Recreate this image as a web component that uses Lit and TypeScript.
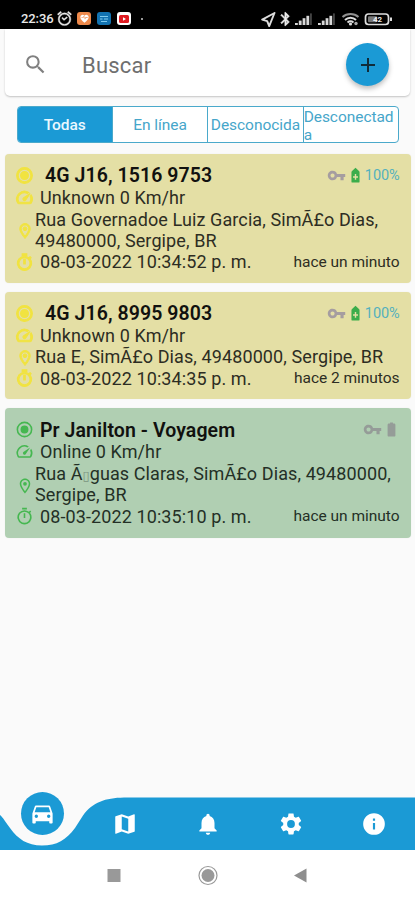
import { LitElement, html, svg, css, nothing } from "lit";
import { customElement, property } from "lit/decorators.js";

const paths: Record<string, string> = {
  search: "M15.5 14h-.79l-.28-.27A6.47 6.47 0 0 0 16 9.5 6.5 6.5 0 1 0 9.5 16c1.61 0 3.09-.59 4.23-1.57l.27.28v.79l5 4.99L20.49 19l-4.99-5zm-6 0C7.01 14 5 11.99 5 9.5S7.01 5 9.5 5 14 7.01 14 9.5 11.99 14 9.5 14z",
  add: "M19 13h-6v6h-2v-6H5v-2h6V5h2v6h6v2z",
  vpn: "M12.65 10A5.990 5.990 0 0 0 7 6c-3.310 0-6 2.690-6 6s2.690 6 6 6a5.990 5.990 0 0 0 5.650-4H17v4h4v-4h2v-4H12.650zM7 14.600c-1.430 0-2.600-1.170-2.600-2.600S5.570 9.400 7 9.400s2.600 1.170 2.600 2.600-1.170 2.600-2.600 2.600z",
  charging: "M12 1L7.500 5.200C6.600 5.900 6.300 6.300 6.300 7V20.700C6.300 21.400 6.900 22 7.600 22h8.800c.7 0 1.300-.6 1.300-1.300V7c0-.7-.3-1.100-1.200-1.800zM11 10h2v3h2.500v2H13v3h-2v-3H8.500v-2H11z",
  battery: "M15.670 3.500H14V2h-4v1.500H8.330C7.600 3.500 6.500 4.100 6.500 5.330v15.330C6.500 21.400 7.600 22 8.330 22h7.330c.74 0 1.840-.6 1.840-1.330V5.330C17.500 4.100 16.400 3.500 15.670 3.500z",
  radio: "M12 7a5 5 0 1 0 0 10 5 5 0 0 0 0-10zm0-5a10 10 0 1 0 0 20 10 10 0 0 0 0-20zm0 18a8 8 0 1 1 0-16 8 8 0 0 1 0 16z",
  speed: "M20.380 8.570l-1.230 1.850a8 8 0 0 1-.22 7.580H5.070A8 8 0 0 1 15.580 6.850l1.850-1.230A10 10 0 0 0 3.350 19a2 2 0 0 0 1.720 1h13.850a2 2 0 0 0 1.740-1 10 10 0 0 0-.27-10.440zm-9.790 6.840a2 2 0 0 0 2.830 0l5.660-8.490-8.490 5.660a2 2 0 0 0 0 2.830z",
  pin: "M12 2C8.130 2 5 5.130 5 9c0 5.250 7 13 7 13s7-7.750 7-13c0-3.870-3.130-7-7-7zM7 9c0-2.760 2.240-5 5-5s5 2.240 5 5c0 2.880-2.880 7.190-5 9.880C9.920 16.210 7 11.850 7 9zm5-2.500a2.500 2.500 0 1 0 0 5 2.500 2.500 0 0 0 0-5z",
  timer: "M15 1H9v2h6V1zm-4 13h2V8h-2v6zm8.030-6.610l1.420-1.420c-.43-.51-.9-.99-1.410-1.410l-1.420 1.420A8.960 8.960 0 0 0 12 4a9 9 0 1 0 7.030 3.390zM12 20a7 7 0 1 1 0-14 7 7 0 0 1 0 14z",
  car: "M18.920 5.010C18.720 4.420 18.160 4 17.500 4h-11c-.66 0-1.210.42-1.420 1.010L3 11v8c0 .55.45 1 1 1h1c.55 0 1-.45 1-1v-1h12v1c0 .55.45 1 1 1h1c.55 0 1-.45 1-1v-8l-2.080-5.990zM6.500 15a1.500 1.500 0 1 1 0-3 1.500 1.500 0 0 1 0 3zm11 0a1.500 1.500 0 1 1 0-3 1.500 1.500 0 0 1 0 3zM5 10l1.500-4.500h11L19 10H5z",
  map: "M20.500 3l-.16.030L15 5.100 9 3 3.360 4.900c-.21.070-.36.250-.36.480V20.500c0 .28.220.5.500.5l.16-.030L9 18.900l6 2.100 5.640-1.900c.21-.070.36-.25.36-.48V3.500c0-.28-.22-.5-.5-.5zM15 19l-6-2.110V5l6 2.110V19z",
  bell: "M12 22c1.100 0 2-.9 2-2h-4c0 1.100.89 2 2 2zm6-6v-5c0-3.070-1.640-5.640-4.500-6.320V4c0-.83-.67-1.500-1.500-1.500s-1.500.67-1.500 1.500v.68C7.630 5.360 6 7.920 6 11v5l-2 2v1h16v-1l-2-2z",
  gear: "M19.140 12.940c.040-.3.060-.61.060-.94 0-.32-.020-.64-.070-.94l2.030-1.580c.18-.14.230-.41.120-.61l-1.920-3.320c-.12-.22-.37-.29-.59-.22l-2.390.96c-.5-.38-1.030-.7-1.620-.94l-.36-2.540c-.040-.24-.24-.41-.48-.41h-3.840c-.24 0-.43.17-.47.41l-.36 2.540c-.59.24-1.130.57-1.620.94l-2.390-.96c-.22-.080-.47 0-.59.22L2.740 8.870c-.12.21-.080.47.120.61l2.030 1.580c-.050.3-.090.63-.090.94s.020.64.070.94l-2.030 1.580c-.18.14-.23.41-.12.61l1.920 3.320c.12.220.37.290.59.220l2.390-.96c.5.380 1.030.7 1.620.94l.36 2.540c.050.240.240.410.480.410h3.840c.24 0 .44-.17.470-.41l.36-2.540c.59-.24 1.130-.56 1.620-.94l2.390.96c.22.080.47 0 .59-.22l1.920-3.320c.12-.22.070-.47-.12-.61l-2.010-1.580zM12 15.600A3.600 3.600 0 1 1 12 8.400a3.600 3.600 0 0 1 0 7.200z",
  info: "M12 2a10 10 0 1 0 0 20 10 10 0 0 0 0-20zm1 15h-2v-6h2v6zm0-8h-2V7h2v2z",
  alarm: "M22 5.720l-4.600-3.860-1.290 1.530 4.600 3.860L22 5.720zM7.880 3.390L6.600 1.860 2 5.710l1.290 1.530 4.590-3.850zM12 4a9 9 0 1 0 0 18 9 9 0 0 0 0-18zm0 16a7 7 0 1 1 0-14 7 7 0 0 1 0 14zM8 11.500l1.200-1.200 2.300 2.200 3.700-3 1 1.300-4.900 4z",
  heart: "M12 21C6 16 3 13 3 9c0-5 6-7 9-3 3-4 9-2 9 3 0 4-3 7-9 12zM5 11h4l2-3 2 6 2-3h4v-1.500h-5l-1 1.500-2-5-3 4H5z",
  bluetooth: "M17.710 7.710L12 2h-1v7.590L6.410 5 5 6.410 10.590 12 5 17.590 6.410 19 11 14.410V22h1l5.710-5.710-4.300-4.290 4.300-4.290zM13 5.830l1.880 1.880L13 9.590V5.830zm1.880 10.460L13 18.170v-3.760l1.880 1.880z",
};

@customElement("ui-icon")
class UiIcon extends LitElement {
  static styles = css`
    :host { display: inline-flex; flex: none; width: 20px; height: 20px; }
    svg { width: 100%; height: 100%; fill: currentColor; stroke: currentColor; stroke-width: var(--icon-stroke, 0); display: block; overflow: visible; }
  `;
  @property() name = "";
  render() {
    return html`<svg viewBox="0 0 24 24">${svg`<path fill-rule="evenodd" d=${paths[this.name]}></path>`}</svg>`;
  }
}

interface Device {
  name: string;
  indented: boolean;
  status: string;
  address: unknown[];
  date: string;
  ago: string;
  battery?: string;
}

@customElement("device-card")
class DeviceCard extends LitElement {
  static styles = css`
    :host { display: block; }
    .card {
      box-sizing: border-box; margin: 0 4.5px 9px 5px; padding: 9.500px 11px 9.700px 10px;
      border-radius: 4px; background: #e4dfa5; color: #2d2d23;
      font-size: 18px; line-height: 21.300px; letter-spacing: 0.1px; white-space: nowrap;
      box-shadow: 0 0 2px #0000000d;
    }
    .online { background: #b0cfb2; color: #243026; padding-bottom: 10.300px; }
    .row { display: flex; align-items: center; height: 22px; }
    .lead { width: 19px; height: 19px; color: #f1e340; margin-right: 6px; --icon-stroke: 1.3; }
    .online .lead { color: #45b750; --icon-stroke: 0; }
    .title { height: 23px; }
    .title .name { font-size: 19.500px; font-weight: 600; color: #11110f; letter-spacing: 0.08px; padding-top: 2px; }
    .title .lead, .title .meta { margin-top: 1px; }
    .indent { margin-left: 5px; }
    .place { display: flex; align-items: center; }
    .place > .lead { width: 18px; height: 18px; margin: 3px 1.500px 0 0.500px; }
    .meta { display: flex; align-items: center; margin-left: auto; color: #a59da0; }
    .meta .key { width: 19px; height: 19px; margin-right: 1px; }
    .meta .bat { width: 17px; height: 17px; }
    .meta .green { color: #3bad4b; }
    .pct { color: #54b1bd; font-size: 14.500px; letter-spacing: -0.1px; margin-left: 1px; }
    .online .key, .online .bat { color: #959c98; }
    .ago { margin-left: auto; font-size: 15.500px; letter-spacing: -0.03px; padding-top: 1px; }
    .box { font: 13px/13px "DejaVu Sans", sans-serif; letter-spacing: 0; color: #7b947f; }
  `;
  @property({ attribute: false }) device!: Device;
  render() {
    const d = this.device;
    const low = d.battery === undefined;
    return html`<div class="card ${low ? "online" : ""}">
      <div class="row title">
        <ui-icon class="lead" name="radio"></ui-icon>
        <span class="name ${d.indented ? "indent" : ""}">${d.name}</span>
        <div class="meta">
          <ui-icon class="key" name="vpn"></ui-icon>
          <ui-icon class="bat ${low ? "" : "green"}" name=${low ? "battery" : "charging"}></ui-icon>
          ${low ? nothing : html`<span class="pct">${d.battery}</span>`}
        </div>
      </div>
      <div class="row"><ui-icon class="lead" name="speed"></ui-icon><span>${d.status}</span></div>
      <div class="place">
        <ui-icon class="lead" name="pin"></ui-icon>
        <div>${d.address.map((l) => html`<div>${l}</div>`)}</div>
      </div>
      <div class="row">
        <ui-icon class="lead" name="timer"></ui-icon><span>${d.date}</span><span class="ago">${d.ago}</span>
      </div>
    </div>`;
  }
}

const devices: Device[] = [
  { name: "4G J16, 1516 9753", indented: true, status: "Unknown 0 Km/hr",
    address: ["Rua Governadoe Luiz Garcia, SimÃ£o Dias,", "49480000, Sergipe, BR"],
    date: "08-03-2022 10:34:52 p. m.", ago: "hace un minuto", battery: "100%" },
  { name: "4G J16, 8995 9803", indented: true, status: "Unknown 0 Km/hr",
    address: ["Rua E, SimÃ£o Dias, 49480000, Sergipe, BR"],
    date: "08-03-2022 10:34:35 p. m.", ago: "hace 2 minutos", battery: "100%" },
  { name: "Pr Janilton - Voyagem", indented: false, status: "Online 0 Km/hr",
    address: [html`Rua Ã<span class="box">▯</span>guas Claras, SimÃ£o Dias, 49480000,`, "Sergipe, BR"],
    date: "08-03-2022 10:35:10 p. m.", ago: "hace un minuto" },
];

@customElement("app-root")
class AppRoot extends LitElement {
  static styles = css`
    :host { display: flex; flex-direction: column; width: 415px; height: 900px; background: #fafafa; font-family: Roboto, sans-serif; overflow: hidden; }
    .status { display: flex; align-items: center; height: 29px; padding: 8px 22px 0 21px; box-sizing: border-box; background: #000; color: #e8e8e8; flex: none; }
    .clock { font-size: 13px; font-weight: 500; width: 35px; letter-spacing: -0.1px; }
    .alarm { width: 17px; height: 17px; margin-right: 4px; --icon-stroke: 0.5; }
    .app { width: 14px; height: 13px; border-radius: 3px; display: flex; align-items: center; justify-content: center; margin-right: 6px; }
    .app ui-icon { width: 11px; height: 11px; color: #fff; }
    .orange { background: #ee8a4c; }
    .blue { background: #1272b0; }
    .blue svg { width: 10px; height: 8px; }
    .white { background: #fff; margin-right: 10px; }
    .white svg { width: 10px; height: 8px; }
    .dot { width: 2px; height: 2px; border-radius: 1px; background: #ccc; }
    .system { margin-left: auto; display: block; width: 132px; height: 18px; }
    .search { display: flex; align-items: center; height: 67px; margin: 0 5px; padding: 0 21px 0 18px; box-sizing: border-box; background: #fff; border-radius: 0 0 5px 5px; box-shadow: 0 1px 2px #00000038; flex: none; }
    .search .glass { width: 25px; height: 25px; color: #808080; margin-top: 4px; }
    .hint { flex: 1; margin-left: 34px; font-size: 22px; color: #6f6f6f; letter-spacing: 0.2px; padding-top: 5px; }
    .plus { width: 43px; height: 43px; border-radius: 50%; background: #1b9ad5; color: #102c3a; display: flex; align-items: center; justify-content: center; box-shadow: 0 3px 5px #00000040; margin-top: 4px; }
    .plus ui-icon { width: 24px; height: 24px; }
    .tabs { display: flex; height: 37px; box-sizing: border-box; margin: 10px 16px 11px 16.500px; border: 1px solid #4aa9cb; border-radius: 4px; background: #fff; overflow: hidden; flex: none; }
    .tab { flex: 1; min-width: 0; display: flex; align-items: center; justify-content: center; color: #46a6ca; font-size: 15.500px; line-height: 18px; letter-spacing: -0.05px; border-left: 1px solid #4aa9cb; white-space: nowrap; box-sizing: border-box; }
    .tab:first-child { background: #1b9ad5; color: #eaf8ff; font-weight: 500; border-left: 0; }
    .tab:last-child { justify-content: flex-start; padding-top: 2px; }
    .list { flex: 1; }
    .nav { position: relative; height: 70px; flex: none; }
    .shape { display: block; width: 415px; height: 70px; }
    .items { position: absolute; inset: 18px 0 0 0; display: grid; grid-template-columns: repeat(5, 83px); place-items: center; color: #fff; }
    .items ui-icon { width: 26px; height: 26px; }
    .items .current { width: 43px; height: 43px; border-radius: 50%; background: #1b9ad5; display: flex; align-items: center; justify-content: center; margin-top: -21px; margin-left: 1px; }
    .items .current ui-icon { width: 27px; height: 27px; margin-top: 1px; }
    .keys { display: flex; height: 50px; background: #fff; flex: none; }
    .keys svg { width: 415px; height: 50px; display: block; }
  `;
  private bars(x: number) {
    return [0, 1, 2, 3, 4].map((i) => svg`<rect x=${x + i * 3.8} y=${13 - i * 2.4} width=${i === 4 ? 1.5 : 2.8} height=${2 + i * 2.4} fill=${i === 4 ? "#555" : "#d8d8d8"}></rect>`);
  }
  render() {
    return html`
      <div class="status">
        <span class="clock">22:36</span>
        <ui-icon class="alarm" name="alarm"></ui-icon>
        <span class="app orange"><ui-icon name="heart"></ui-icon></span>
        <span class="app blue"><svg viewBox="0 0 10 8"><path d="M1 1.500h8M1 4h2.500M5 4h4M2 6.500h6" fill="none" stroke="#7fcbef" stroke-width="1.200"></path></svg></span>
        <span class="app white"><svg viewBox="0 0 10 8"><rect width="10" height="8" rx="1.500" fill="#e01b22"></rect><path d="M4 2.200v3.600L7 4z" fill="#fff"></path></svg></span>
        <span class="dot"></span>
        <svg class="system" viewBox="0 0 132 18">
          <path d="M13.500 3L1.200 9.600l5 1.500 2 5z" fill="none" stroke="#ddd" stroke-width="1.900" stroke-linejoin="round"></path>
          <g transform="translate(16.500 1) scale(.67)"><path d=${paths.bluetooth} fill="#eee" stroke="#eee" stroke-width=".9"></path></g>
          ${this.bars(34)}${this.bars(57)}
          <g fill="none" stroke="#ddd" stroke-width="2"><path d="M81.500 7c4.500-4 11.500-4 16 0" opacity=".65"></path><path d="M84 10c3-3 8-3 11 0"></path><path d="M86.500 12.500c2-1.600 4-1.600 6 0"></path></g>
          <circle cx="89.500" cy="14" r="1.600" fill="#ddd"></circle><circle cx="95" cy="13.500" r="1.700" fill="#aaa"></circle>
          <rect x="104.500" y="4" width="23" height="10.500" rx="3" fill="none" stroke="#ddd" stroke-width="1.700"></rect>
          <rect x="107" y="6.300" width="9" height="6" rx="1" fill="#777"></rect>
          <text x="116.500" y="12.200" font-size="8" font-weight="700" text-anchor="middle" fill="#eee">42</text>
          <rect x="129" y="7.500" width="2" height="3.500" fill="#ddd"></rect>
        </svg>
      </div>
      <div class="search">
        <ui-icon class="glass" name="search"></ui-icon>
        <span class="hint">Buscar</span>
        <div class="plus"><ui-icon name="add"></ui-icon></div>
      </div>
      <div class="tabs">
        <div class="tab">Todas</div>
        <div class="tab">En línea</div>
        <div class="tab">Desconocida</div>
        <div class="tab">Desconectad<br>a</div>
      </div>
      <div class="list">${devices.map((d) => html`<device-card .device=${d}></device-card>`)}</div>
      <div class="nav">
        <svg class="shape" viewBox="0 0 415 70"><path fill="#1b9ad5" d="M0 35C2 36 7 44 10 48C18 59 27 65.500 42 65.500S66 60 75 48L83 35.500C93 22 105 18 124 17.500H415V70H0Z"></path></svg>
        <div class="items">
          <div class="current"><ui-icon name="car"></ui-icon></div>
          <ui-icon name="map"></ui-icon>
          <ui-icon name="bell"></ui-icon>
          <ui-icon name="gear"></ui-icon>
          <ui-icon name="info"></ui-icon>
        </div>
      </div>
      <div class="keys">
        <svg viewBox="0 0 415 50">
          <rect x="107.500" y="19" width="13" height="13" fill="#999"></rect>
          <circle cx="208" cy="25.500" r="9" fill="none" stroke="#999" stroke-width="1.200"></circle>
          <circle cx="208" cy="25.500" r="6.500" fill="#999"></circle>
          <path d="M294 25.500L306.500 18.500v14z" fill="#8e8e8e"></path>
        </svg>
      </div>`;
  }
}
